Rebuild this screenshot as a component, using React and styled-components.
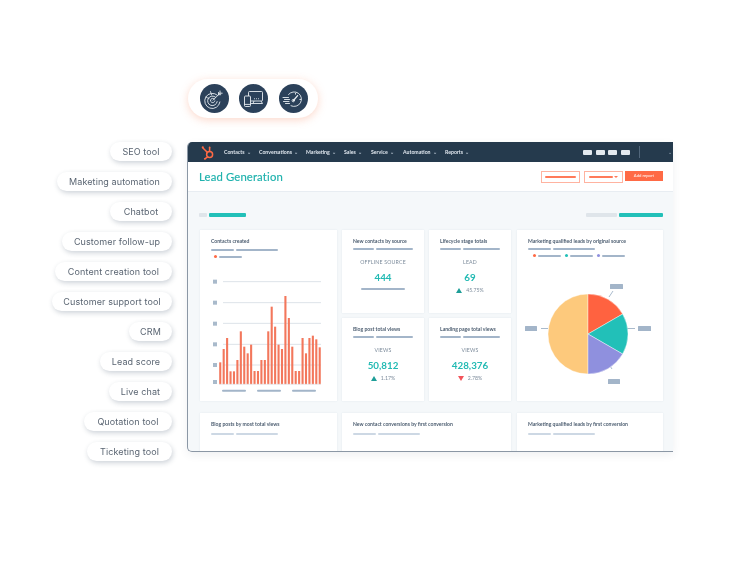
import React from "react";
import styled, { createGlobalStyle } from "styled-components";

const Global = createGlobalStyle`
  html, body { margin: 0; padding: 0; background: #fff; }
  #root { width: 732px; height: 561px; overflow: hidden; }
`;

const Stage = styled.div`
  display: grid;
  grid-template-columns: 172px 486px;
  grid-template-rows: 39px auto;
  column-gap: 15px;
  row-gap: 24px;
  padding-top: 79px;
  font-family: "Lato", "Liberation Sans", sans-serif;
  filter: blur(0.3px);
`;

const Toolbar = styled.div`
  grid-column: 2;
  margin-left: 1px;
  width: 130px;
  height: 39px;
  box-sizing: border-box;
  padding-left: 11.5px;
  display: flex;
  align-items: center;
  gap: 10.5px;
  background: #fff;
  border-radius: 20px;
  box-shadow: 0 2px 9px rgba(247, 150, 115, 0.38);
`;

const Round = styled.div`
  width: 29px;
  height: 29px;
  border-radius: 50%;
  background: #2b415a;
  display: flex;
  align-items: center;
  justify-content: center;
`;

const Tags = styled.div`
  grid-column: 1;
  display: flex;
  flex-direction: column;
  align-items: flex-end;
  gap: 11px;
`;

const Tag = styled.div`
  width: ${p => p.$w}px;
  height: 19px;
  box-sizing: border-box;
  display: flex;
  align-items: center;
  justify-content: center;
  background: #fff;
  border-radius: 10px;
  box-shadow: 1px 2px 5px rgba(50, 70, 95, 0.24);
  font-family: "Inter", sans-serif;
  font-size: 9px;
  letter-spacing: 0.1px;
  color: #5a6572;
  white-space: nowrap;
`;

const Win = styled.div`
  grid-column: 2;
  height: 310px;
  box-sizing: border-box;
  border-left: 1px solid #8b97a5;
  border-bottom: 1px solid #8b97a5;
  border-radius: 5px 0 0 5px;
  overflow: hidden;
  background: #f5f8fa;
  box-shadow: 0 3px 8px rgba(50, 70, 95, 0.08);
`;

const Nav = styled.div`
  height: 20px;
  background: #253a4d;
  display: flex;
  align-items: center;
  padding-left: 13px;
`;

const Sprocket = styled.svg`
  width: 14px;
  height: 15px;
  margin-right: 9px;
  flex: none;
`;

const NavItems = styled.div`
  display: flex;
  width: 267px;
  gap: 0;
`;

const NavItem = styled.span`
  width: ${p => p.$w}px;
  flex: none;
  font-size: 5.2px;
  font-weight: 700;
  color: #dfe6ee;
  white-space: nowrap;
  &::after {
    content: "⌄";
    margin-left: 2px;
    font-size: 5px;
    color: #a8b6c4;
  }
`;

const NavTools = styled.div`
  display: flex;
  align-items: center;
  gap: 3.5px;
  margin-left: 92px;
`;

const NavBtn = styled.span`
  width: 9px;
  height: 5px;
  border-radius: 1px;
  background: #e3e9ef;
`;

const NavDivider = styled.span`
  width: 1px;
  height: 12px;
  margin-left: 6px;
  background: #51667b;
`;

const NavCaret = styled.span`
  margin-left: 24px;
  font-size: 5px;
  color: #a8b6c4;
`;

const TitleBar = styled.div`
  height: 30px;
  box-sizing: border-box;
  background: #fff;
  border-bottom: 1px solid #e8edf2;
  display: flex;
  align-items: center;
  padding: 0 10px 0 11px;
`;

const Title = styled.h1`
  margin: 0;
  flex: 1;
  font-size: 11.3px;
  font-weight: 400;
  letter-spacing: 0.15px;
  color: #1fb2ad;
  -webkit-text-stroke: 0.15px #1fb2ad;
`;

const Outline = styled.div`
  width: ${p => p.$w}px;
  height: 12px;
  box-sizing: border-box;
  margin-right: 4px;
  border: 1px solid #ffb3a0;
  display: flex;
  align-items: center;
  justify-content: center;
  gap: 1px;
`;

const Line = styled.span`
  display: block;
  flex: none;
  width: ${p => p.$w}px;
  height: ${p => p.$h || 2}px;
  border-radius: 1px;
  background: ${p => p.$c || "#a3b5c9"};
`;

const MiniCaret = styled.span`
  width: 0;
  height: 0;
  border-left: 2px solid transparent;
  border-right: 2px solid transparent;
  border-top: 2.5px solid #ff7a59;
`;

const AddBtn = styled.div`
  width: 38px;
  height: 10px;
  margin: -2px 0 0 -2px;
  background: #ff6a45;
  color: #ffe3da;
  font-size: 4.2px;
  font-weight: 700;
  display: flex;
  align-items: center;
  justify-content: center;
`;

const Content = styled.div`
  padding: 21px 10px 0 12px;
`;

const Tabs = styled.div`
  display: flex;
  align-items: center;
  justify-content: space-between;
  margin-left: -1px;
  margin-bottom: 13px;
`;

const TabGroup = styled.div`
  display: flex;
  gap: 2px;
`;

const Grid = styled.div`
  display: grid;
  grid-template-columns: 137px 82px 82px 146px;
  grid-template-rows: 83px 83px 60px;
  column-gap: 5px;
  row-gap: 5px;
`;

const Card = styled.section`
  background: #fff;
  box-sizing: border-box;
  padding: 8px 11px 0;
  box-shadow: 0 0 2px rgba(120, 140, 165, 0.14);
  grid-column: ${p => p.$col || "auto"};
  grid-row: ${p => p.$row || "auto"};
  margin-top: ${p => p.$mt || 0}px;
  margin-left: ${p => p.$shift || 0}px;
  margin-right: ${p => -(p.$shift || 0)}px;
  display: flex;
  flex-direction: column;
`;

const CardTitle = styled.h3`
  margin: 0;
  font-size: 5.1px;
  line-height: 7px;
  font-weight: 700;
  color: #4c5d70;
  white-space: nowrap;
`;

const Bars = styled.div`
  display: flex;
  gap: 2px;
  margin-top: ${p => p.$mt || 3}px;
`;

const Legend = styled.div`
  display: flex;
  align-items: center;
  margin-top: ${p => p.$mt || 4}px;
  padding-left: ${p => p.$pl || 0}px;
`;

const Dot = styled.span`
  flex: none;
  width: 3px;
  height: 3px;
  border-radius: 50%;
  margin-right: 2px;
  background: ${p => p.$c};
`;

const LegendEntry = styled.span`
  display: flex;
  align-items: center;
  margin-right: 4px;
`;

const Metric = styled.div`
  display: flex;
  flex-direction: column;
  align-items: center;
  margin-top: 8px;
`;

const MetricLabel = styled.div`
  font-size: 5.2px;
  line-height: 8px;
  letter-spacing: 0.2px;
  color: #7c8b9b;
`;

const MetricValue = styled.div`
  margin-top: 5px;
  font-size: 9.8px;
  line-height: 12px;
  font-weight: 700;
  color: #22bab3;
`;

const Delta = styled.div`
  margin-top: 4px;
  display: flex;
  align-items: center;
  gap: 4px;
  font-size: 5.2px;
  line-height: 7px;
  color: #7c8b9b;
`;

const Up = styled.span`
  width: 0;
  height: 0;
  border-left: 3.5px solid transparent;
  border-right: 3.5px solid transparent;
  border-bottom: 5px solid #1e9e98;
`;

const Down = styled.span`
  width: 0;
  height: 0;
  border-left: 3.5px solid transparent;
  border-right: 3.5px solid transparent;
  border-top: 5px solid #f2545b;
`;

const Spaced = styled.div`
  margin-top: 5px;
`;

const ChartSvg = styled.svg`
  display: block;
  width: 137px;
  margin: 13px -11px 0;
`;

const PieSvg = styled.svg`
  display: block;
  width: 146px;
  margin: 14px -11px 0;
`;

const TitleBars = ({ a = 23, b = 42, c, mt }) => (
  <Bars $mt={mt}>
    <Line $w={a} $c={c} />
    <Line $w={b} $c={c} />
  </Bars>
);

const TargetIcon = () => (
  <svg width="20" height="20" viewBox="0 0 20 20" fill="none" stroke="#e8edf2" strokeWidth="0.9" strokeLinecap="round">
    <path d="M13.4 6.2A7.6 7.6 0 1 0 15.9 13" />
    <path d="M11.6 8.2A4.8 4.8 0 1 0 13.2 12.6" />
    <path d="M10.4 10A2.2 2.2 0 1 0 10.9 11.9" />
    <path d="M9 11.2L16 4.2M16 4.2V2M16 4.2H18.2M14.5 5.7V3.5M14.5 5.7H16.7" />
    <path d="M2 8L5 9.5M6.5 2.6L7.6 6" strokeDasharray="1.2 1" />
  </svg>
);

const DevicesIcon = () => (
  <svg width="22" height="20" viewBox="0 0 22 20" fill="none" stroke="#e8edf2" strokeWidth="0.9" strokeLinejoin="round">
    <rect x="5.5" y="2.5" width="14" height="9.5" rx="1" />
    <rect x="1.5" y="7" width="6" height="10.5" rx="1" fill="#2b415a" />
    <path d="M1.5 15.4H7.5" />
    <path d="M7.5 14.5H19.5L18 12M10 14.5L11 12" />
    <path d="M11 9.7H11.8M13 9.7H13.8M15 9.7H15.8" strokeWidth="1.1" />
  </svg>
);

const SpeedIcon = () => (
  <svg width="22" height="20" viewBox="0 0 22 20" fill="none" stroke="#e8edf2" strokeWidth="0.9" strokeLinecap="round">
    <path d="M6.5 5.5A7.3 7.3 0 1 1 9 16.8" />
    <path d="M1 8.5H6.5M2.5 10.5H7.5M1.5 12.5H7M3.5 14.5H7.5" />
    <path d="M11.5 11.5L15.6 6.6" strokeWidth="1.3" />
    <circle cx="11.3" cy="11.6" r="1.2" />
    <path d="M13.5 4.2V5.2M17.8 10.5H18.8" />
  </svg>
);

const Logo = () => (
  <Sprocket viewBox="0 0 14 15" fill="none" stroke="#ff6a45" strokeWidth="1.5" strokeLinecap="round">
    <circle cx="8.6" cy="9.6" r="3" />
    <path d="M8.6 6.6V3" />
    <path d="M6.5 7.5L2.2 3.2" />
    <path d="M6.6 11.8L4.2 13.6" />
    <circle cx="8.6" cy="2.4" r="0.9" fill="#ff6a45" stroke="none" />
    <circle cx="1.8" cy="2.4" r="1.1" fill="#ff6a45" stroke="none" />
    <circle cx="3.8" cy="13.8" r="0.9" fill="#ff6a45" stroke="none" />
  </Sprocket>
);

const barTops = [412, 372, 339, 439, 439, 405, 319, 365, 385, 359, 438, 438, 405, 405, 319, 245, 305, 359, 372, 213, 279, 365, 438, 438, 339, 385, 339, 332, 343, 367];

/* chart svg has its origin at x=200, y=271 of the page */
const BarChart = () => {
  const toY = z => z / 3 + 225 - 271;
  return (
    <ChartSvg viewBox="0 0 137 128" height="128">
      {[170, 233, 295, 358, 420].map(z => (
        <line key={z} x1="23" x2="121" y1={toY(z)} y2={toY(z)} stroke="#dde3e9" strokeWidth="1" />
      ))}
      {[170, 233, 296, 358, 420, 471].map(z => (
        <rect key={z} x="13" y={toY(z) - 2} width="4" height="4" fill="#a9bacb" />
      ))}
      {barTops.map((z, i) => (
        <rect key={i} x={19.2 + i * 3.43} y={toY(z)} width="2.1" height={toY(478) - toY(z)} fill="#f3775c" />
      ))}
      <line x1="19" x2="121" y1={toY(478)} y2={toY(478)} stroke="#e6ebf0" strokeWidth="0.8" />
      {[22, 57, 92].map(x => (
        <rect key={x} x={x} y={toY(497) - 1} width="24" height="2" rx="1" fill="#a3b5c9" />
      ))}
    </ChartSvg>
  );
};

const slice = (a0, a1, r = 40) => {
  const p = a => [r * Math.sin((a * Math.PI) / 180), -r * Math.cos((a * Math.PI) / 180)];
  const [x0, y0] = p(a0);
  const [x1, y1] = p(a1);
  return `M0 0L${x0} ${y0}A${r} ${r} 0 ${a1 - a0 > 180 ? 1 : 0} 1 ${x1} ${y1}Z`;
};

/* pie svg has its origin at x=517, y=271 of the page */
const Pie = () => (
  <PieSvg viewBox="0 0 146 128" height="128">
    <g stroke="#9fb2c6" strokeWidth="0.9">
      <line x1="96" y1="20" x2="92" y2="26" />
      <line x1="110" y1="57.5" x2="118" y2="57.5" />
      <line x1="91" y1="92" x2="95" y2="98" />
      <line x1="24" y1="57.5" x2="31" y2="57.5" />
    </g>
    <g fill="#a3b5c9">
      <rect x="93" y="13" width="13" height="5" rx="0.5" />
      <rect x="121" y="55" width="13" height="5" rx="0.5" />
      <rect x="91" y="108" width="12" height="5" rx="0.5" />
      <rect x="8" y="55" width="12" height="5" rx="0.5" />
    </g>
    <g transform="translate(71 63)" stroke="#fff" strokeWidth="0.4">
      <path d={slice(180, 360)} fill="#fdc97c" />
      <path d={slice(0, 60)} fill="#ff6240" />
      <path d={slice(60, 120)} fill="#22c0b8" />
      <path d={slice(120, 180)} fill="#8f90de" />
    </g>
  </PieSvg>
);

const tags = [
  ["SEO tool", 62], ["Maketing automation", 115], ["Chatbot", 62], ["Customer follow-up", 110],
  ["Content creation tool", 117], ["Customer support tool", 120], ["CRM", 43], ["Lead score", 72],
  ["Live chat", 63], ["Quotation tool", 88], ["Ticketing tool", 85],
];

const nav = [
  ["Contacts", 35], ["Conversations", 47], ["Marketing", 38], ["Sales", 27],
  ["Service", 32], ["Automation", 42], ["Reports", 40],
];

export default function App() {
  return (
    <>
      <Global />
      <Stage>
        <Toolbar>
          <Round><TargetIcon /></Round>
          <Round><DevicesIcon /></Round>
          <Round><SpeedIcon /></Round>
        </Toolbar>
        <Tags>
          {tags.map(([t, w]) => <Tag key={t} $w={w}>{t}</Tag>)}
        </Tags>
        <Win>
          <Nav>
            <Logo />
            <NavItems>
              {nav.map(([n, w]) => <NavItem key={n} $w={w}>{n}</NavItem>)}
            </NavItems>
            <NavTools>
              <NavBtn /><NavBtn /><NavBtn /><NavBtn />
              <NavDivider />
              <NavCaret>⌄</NavCaret>
            </NavTools>
          </Nav>
          <TitleBar>
            <Title>Lead Generation</Title>
            <Outline $w={39}><Line $w={31} $c="#ff7a59" /></Outline>
            <Outline $w={39}><Line $w={24} $c="#ff7a59" /><MiniCaret /></Outline>
            <AddBtn>Add report</AddBtn>
          </TitleBar>
          <Content>
            <Tabs>
              <TabGroup>
                <Line $w={8} $h={4} $c="#dfe5ea" />
                <Line $w={37} $h={4} $c="#22c0b8" />
              </TabGroup>
              <TabGroup>
                <Line $w={31} $h={4} $c="#dfe5ea" />
                <Line $w={44} $h={4} $c="#22c0b8" />
              </TabGroup>
            </Tabs>
            <Grid>
              <Card $col="1" $row="1 / span 2">
                <CardTitle>Contacts created</CardTitle>
                <TitleBars mt={4} />
                <Legend $pl={3}><Dot $c="#ff6a45" /><Line $w={23} /></Legend>
                <BarChart />
              </Card>
              <Card $col="2" $row="1">
                <CardTitle>New contacts by source</CardTitle>
                <TitleBars a={21} b={37} />
                <Metric>
                  <MetricLabel>OFFLINE SOURCE</MetricLabel>
                  <MetricValue>444</MetricValue>
                  <Spaced><Line $w={44} /></Spaced>
                </Metric>
              </Card>
              <Card $col="3" $row="1">
                <CardTitle>Lifecycle stage totals</CardTitle>
                <TitleBars a={21} b={37} />
                <Metric>
                  <MetricLabel>LEAD</MetricLabel>
                  <MetricValue>69</MetricValue>
                  <Delta><Up />45.75%</Delta>
                </Metric>
              </Card>
              <Card $col="4" $row="1 / span 2" $shift={1}>
                <CardTitle>Marketing qualified leads by original source</CardTitle>
                <TitleBars />
                <Legend $pl={5}>
                  <LegendEntry><Dot $c="#ff6a45" /><Line $w={23} /></LegendEntry>
                  <LegendEntry><Dot $c="#22c0b8" /><Line $w={23} /></LegendEntry>
                  <LegendEntry><Dot $c="#8f90de" /><Line $w={23} /></LegendEntry>
                </Legend>
                <Pie />
              </Card>
              <Card $col="2" $row="2">
                <CardTitle>Blog post total views</CardTitle>
                <TitleBars a={21} b={37} />
                <Metric>
                  <MetricLabel>VIEWS</MetricLabel>
                  <MetricValue>50,812</MetricValue>
                  <Delta><Up />1.17%</Delta>
                </Metric>
              </Card>
              <Card $col="3" $row="2">
                <CardTitle>Landing page total views</CardTitle>
                <TitleBars a={21} b={37} />
                <Metric>
                  <MetricLabel>VIEWS</MetricLabel>
                  <MetricValue>428,376</MetricValue>
                  <Delta><Down />2.78%</Delta>
                </Metric>
              </Card>
              <Card $col="1" $row="3" $mt={7}>
                <CardTitle>Blog posts by most total views</CardTitle>
                <TitleBars c="#cdd8e4" mt={5} />
              </Card>
              <Card $col="2 / span 2" $row="3" $mt={7}>
                <CardTitle>New contact conversions by first conversion</CardTitle>
                <TitleBars c="#cdd8e4" mt={5} />
              </Card>
              <Card $col="4" $row="3" $mt={7} $shift={1}>
                <CardTitle>Marketing qualified leads by first conversion</CardTitle>
                <TitleBars c="#cdd8e4" mt={5} />
              </Card>
            </Grid>
          </Content>
        </Win>
      </Stage>
    </>
  );
}
